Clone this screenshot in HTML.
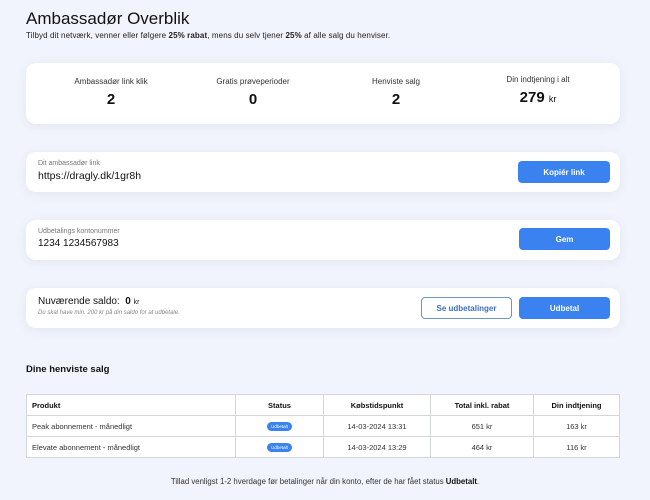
<!DOCTYPE html>
<html><head><meta charset="utf-8"><style>
*{box-sizing:border-box;margin:0;padding:0}
body{width:650px;height:500px;background:#f1f4fc;font-family:"Liberation Sans",sans-serif;color:#1a1a2e;position:relative;overflow:hidden}
.abs{position:absolute}
.card{position:absolute;left:26px;width:594px;background:#fff;border-radius:10px;box-shadow:0 2px 10px rgba(120,130,170,.12)}
.btn{position:absolute;height:22px;border-radius:4px;background:#3a82f0;color:#fff;font-size:8px;font-weight:bold;display:flex;align-items:center;justify-content:center}
.stat{position:absolute;top:14px;width:150px;text-align:center;font-size:8px;color:#333}
.stat b{display:block;font-size:15px;color:#111;margin-top:5px}
table{position:absolute;left:26px;top:394px;width:594px;border-collapse:collapse;font-size:7.5px;background:#fff}
td,th{border:1px solid #d4d6de;height:21px;text-align:center;color:#333}
th{font-weight:bold;color:#111}
td:first-child,th:first-child{text-align:left;padding-left:5px}
.pill{display:inline-block;background:#3a82f0;color:#fff;font-size:4.5px;border-radius:5px;padding:2px 4px}
</style></head><body>
<div class="abs" style="left:26px;top:9px;font-size:17px;color:#111">Ambassadør Overblik</div>
<div class="abs" style="left:26px;top:31px;font-size:8px;color:#222;letter-spacing:0.1px">Tilbyd dit netværk, venner eller følgere <b>25% rabat</b>, mens du selv tjener <b>25%</b> af alle salg du henviser.</div>

<div class="card" style="top:63px;height:61px">
<div class="stat" style="left:10px">Ambassadør link klik<b>2</b></div>
<div class="stat" style="left:152px">Gratis prøveperioder<b>0</b></div>
<div class="stat" style="left:295px">Henviste salg<b>2</b></div>
<div class="stat" style="left:437px;top:12px">Din indtjening i alt<b>279 <span style="font-size:9px;font-weight:normal">kr</span></b></div>
</div>

<div class="card" style="top:152px;height:40px">
<div class="abs" style="left:12px;top:8px;font-size:7px;color:#777">Dit ambassadør link</div>
<div class="abs" style="left:12px;top:18px;font-size:10.5px;color:#111">https://dragly.dk/1gr8h</div>
<div class="btn" style="left:492px;top:9px;width:92px">Kopiér link</div>
</div>

<div class="card" style="top:220px;height:40px">
<div class="abs" style="left:12px;top:8px;font-size:7px;color:#777">Udbetalings kontonummer</div>
<div class="abs" style="left:12px;top:18px;font-size:10px;color:#111">1234 1234567983</div>
<div class="btn" style="left:493px;top:8px;width:91px">Gem</div>
</div>

<div class="card" style="top:288px;height:40px">
<div class="abs" style="left:12px;top:8px;font-size:10px;color:#111">Nuværende saldo: &nbsp;<b>0</b> <span style="font-size:7px">kr</span></div>
<div class="abs" style="left:12px;top:22px;font-size:6px;color:#888;font-style:italic">Du skal have min. 200 kr på din saldo for at udbetale.</div>
<div class="btn" style="left:395px;top:9px;width:91px;background:#fff;color:#3a6fc0;border:1px solid #6f94cc">Se udbetalinger</div>
<div class="btn" style="left:493px;top:9px;width:91px">Udbetal</div>
</div>

<div class="abs" style="left:26px;top:364px;font-size:9.5px;font-weight:bold;color:#111">Dine henviste salg</div>
<table>
<tr><th style="width:209px">Produkt</th><th style="width:88px">Status</th><th style="width:107px">Købstidspunkt</th><th style="width:103px">Total inkl. rabat</th><th>Din indtjening</th></tr>
<tr><td>Peak abonnement - månedligt</td><td><span class="pill">Udbetalt</span></td><td>14-03-2024 13:31</td><td>651 kr</td><td>163 kr</td></tr>
<tr><td>Elevate abonnement - månedligt</td><td><span class="pill">Udbetalt</span></td><td>14-03-2024 13:29</td><td>464 kr</td><td>116 kr</td></tr>
</table>
<div class="abs" style="left:0;width:650px;top:477px;text-align:center;font-size:7.8px;color:#333">Tillad venligst 1-2 hverdage før betalinger når din konto, efter de har fået status <b style="color:#111">Udbetalt</b>.</div>
</body></html>
